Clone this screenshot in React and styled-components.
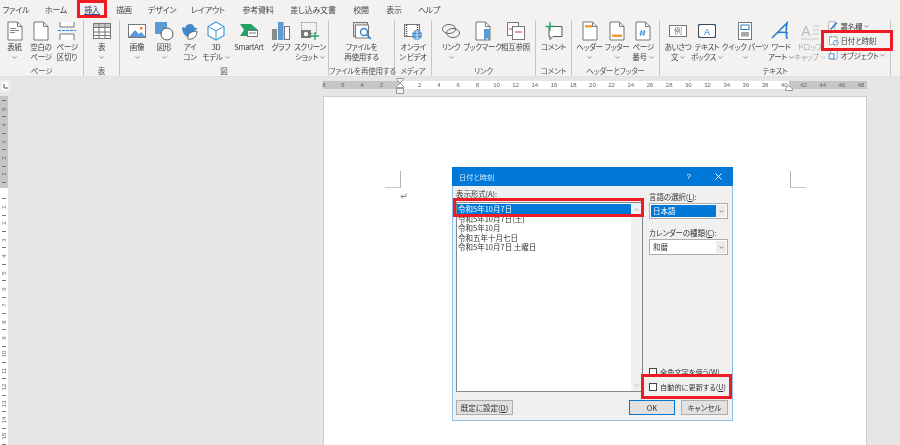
import React from "react";
import styled, { createGlobalStyle } from "styled-components";

const GlobalStyle = createGlobalStyle`
  html, body {
    margin: 0;
    padding: 0;
    background: #e6e6e6;
  }
  * {
    box-sizing: border-box;
  }
`;

const Screen = styled.div`
  position: relative;
  width: 900px;
  height: 445px;
  overflow: hidden;
  display: flex;
  flex-direction: column;
  font-family: "Noto Sans CJK JP", "Noto Sans", sans-serif;
  font-feature-settings: "palt";
  color: #444;
  filter: blur(0.3px);
`;

const Ribbon = styled.div`
  height: 77px;
  flex: none;
  background: #f3f2f1;
  border-bottom: 1px solid #e2e1df;
  display: flex;
  flex-direction: column;
`;

const TabRow = styled.div`
  height: 20px;
  display: flex;
  padding-bottom: 1px;
  align-items: center;
  font-size: 8px;
`;

const Tab = styled.div`
  width: ${(p) => p.$w}px;
  flex: none;
  display: flex;
  justify-content: center;
  letter-spacing: -0.2px;
`;

const TabText = styled.span`
  position: relative;
  line-height: 18px;
  white-space: nowrap;
  color: ${(p) => (p.$active ? "#2b3f6a" : "#444")};

  ${(p) =>
    p.$active &&
    `
    &::after {
      content: "";
      position: absolute;
      left: 0;
      right: 0;
      bottom: 3px;
      height: 1.5px;
      background: #2b579a;
    }
  `}
`;

const GroupRow = styled.div`
  display: flex;
  height: 56px;
`;

const Group = styled.div`
  width: ${(p) => p.$w}px;
  flex: none;
  display: flex;
  flex-direction: column;
  border-right: 1px solid #c8c6c4;
`;

const Buttons = styled.div`
  height: 46px;
  display: flex;
  padding-left: ${(p) => p.$pad || 0}px;
`;

const GroupName = styled.div`
  height: 10px;
  font-size: 7.5px;
  line-height: 10px;
  text-align: center;
  white-space: nowrap;
  letter-spacing: -0.2px;
  color: #555;
`;

const Tool = styled.div`
  width: ${(p) => p.$w}px;
  flex: none;
  display: flex;
  flex-direction: column;
  align-items: center;
  color: ${(p) => (p.$off ? "#a6a6a6" : "#444")};
`;

const ToolIcon = styled.div`
  height: 22px;
  flex: none;
  display: flex;
  align-items: center;
  justify-content: center;
`;

const ToolLine = styled.div`
  height: 10px;
  font-size: 7.5px;
  line-height: 10px;
  letter-spacing: -0.3px;
  white-space: nowrap;
  display: flex;
  align-items: center;
  gap: 2px;
`;

const Stack = styled.div`
  width: 60px;
  display: flex;
  flex-direction: column;
  margin-top: -1px;
  padding-left: 2px;
`;

const StackRow = styled.div`
  height: 14.5px;
  display: flex;
  align-items: center;
  gap: 1.5px;
  font-size: 7.5px;
  letter-spacing: -0.2px;
  white-space: nowrap;
`;

const Workspace = styled.div`
  flex: 1;
  display: flex;
  flex-direction: column;
  padding-top: 3px;
  background: #e6e6e6;
`;

const RulerRow = styled.div`
  height: 13px;
  display: flex;
`;

const Corner = styled.div`
  width: 10px;
  height: 12px;
  background: #fff;
  border: 2px solid #eeeeee;
  display: flex;
  align-items: center;
  justify-content: center;
`;

const HRuler = styled.div`
  position: relative;
  margin: 1px 0 0 313px;
  width: 544px;
  height: 8px;
  display: flex;
  background: linear-gradient(
    to right,
    #c6c6c6 77px,
    #fff 77px,
    #fff 466px,
    #c6c6c6 466px
  );
`;

const RulerNum = styled.span`
  width: 19.2px;
  flex: none;
  text-align: center;
  font-family: "Liberation Sans", sans-serif;
  font-size: 6px;
  line-height: 8px;
  color: #666;

  &:first-child {
    margin-left: -8.8px;
  }
`;

const Marker = styled.svg`
  position: absolute;
  left: ${(p) => p.$x}px;
  top: ${(p) => p.$y}px;
`;

const DocRow = styled.div`
  flex: 1;
  display: flex;
  margin-top: 4px;
`;

const VRuler = styled.div`
  width: 8px;
  flex: none;
  margin-top: -1px;
  padding-top: 0.5px;
  display: flex;
  flex-direction: column;
  align-items: center;
  background: linear-gradient(to bottom, #c6c6c6 92px, #fff 92px);
`;

const VCell = styled.div`
  height: 8.2px;
  flex: none;
  display: flex;
  align-items: center;
  justify-content: center;
  font-family: "Liberation Sans", sans-serif;
  font-size: 6px;
  line-height: 8px;
  color: #666;

  span {
    display: block;
    transform: rotate(-90deg);
  }

  i {
    display: block;
    width: 4px;
    height: 1px;
    background: #777;
  }
`;

const Page = styled.div`
  margin-left: 316px;
  width: 542px;
  background: #fff;
  box-shadow: 0 0 0 1px #cfcfcf;
  padding: 74px 60px 0 61px;
`;

const CropRow = styled.div`
  display: flex;
  justify-content: space-between;
`;

const Crop = styled.div`
  width: 16px;
  height: 17px;
  border-bottom: 1px solid #c8c8c8;
  border-${(p) => (p.$right ? "left" : "right")}: 1px solid #b4b4b4;
`;

const ReturnMark = styled.svg`
  display: block;
  margin: 5px 0 0 15px;
`;

const Dialog = styled.div`
  position: absolute;
  left: 452px;
  top: 167px;
  width: 281px;
  height: 254px;
  display: flex;
  flex-direction: column;
  background: #f0f0f0;
  border: 1px solid #8fc0e8;
  border-top: none;
`;

const TitleBar = styled.div`
  height: 19px;
  margin: 0 -1px;
  flex: none;
  display: flex;
  align-items: center;
  padding: 0 11px 0 7px;
  background: #0078d7;
  color: #d6e9f8;
  font-size: 7.2px;
`;

const TitleText = styled.div`
  flex: 1;
`;

const TitleHelp = styled.div`
  font-family: "Liberation Sans", sans-serif;
  font-size: 8px;
  color: #fff;
  margin-right: 24px;
`;

const DialogBody = styled.div`
  flex: 1;
  display: flex;
  gap: 6px;
  padding: 0 4px 0 3px;
`;

const LeftCol = styled.div`
  width: 187px;
  flex: none;
  display: flex;
  flex-direction: column;
`;

const RightCol = styled.div`
  width: 79px;
  flex: none;
  display: flex;
  flex-direction: column;
`;

const FieldLabel = styled.div`
  font-size: 7.5px;
  line-height: 11px;
  color: #333;
  white-space: nowrap;
  letter-spacing: -0.1px;
  margin-top: ${(p) => p.$top}px;
  margin-bottom: ${(p) => p.$bottom}px;
`;

const ListBox = styled.div`
  height: 190px;
  display: flex;
  background: #fff;
  border: 1px solid #828790;
`;

const ListItems = styled.div`
  flex: 1;
  padding: 1px 0 0 0;
`;

const ListItem = styled.div`
  height: ${(p) => (p.$selected ? "10px" : "9.4px")};
  padding-left: 1px;
  font-size: 7.5px;
  line-height: 9.4px;
  white-space: nowrap;
  color: ${(p) => (p.$selected ? "#fff" : "#333")};
  background: ${(p) => (p.$selected ? "#0078d7" : "transparent")};
`;

const ScrollBar = styled.div`
  width: 11px;
  flex: none;
  display: flex;
  flex-direction: column;
  justify-content: space-between;
  align-items: center;
  padding: 5px 0 4px;
  background: #f0f0f0;
`;

const Select = styled.div`
  height: 16px;
  display: flex;
  padding: 1px;
  background: #fff;
  border: 1px solid #adadad;
`;

const SelectValue = styled.div`
  flex: 1;
  padding-left: 2px;
  font-size: 7.5px;
  line-height: 12px;
  color: ${(p) => (p.$selected ? "#fff" : "#333")};
  background: ${(p) => (p.$selected ? "#0078d7" : "transparent")};
`;

const SelectArrow = styled.div`
  width: 10px;
  flex: none;
  display: flex;
  align-items: center;
  justify-content: center;
  background: #ececec;
`;

const Checks = styled.div`
  margin-top: 112px;
  display: flex;
  flex-direction: column;
  gap: 5px;
`;

const CheckRow = styled.div`
  height: 10px;
  display: flex;
  align-items: center;
  gap: 3px;
  font-size: 7.2px;
  color: #333;
  white-space: nowrap;
`;

const CheckBox = styled.div`
  width: 8px;
  height: 8px;
  flex: none;
  background: #fff;
  border: 1px solid #444;
`;

const DialogFooter = styled.div`
  display: flex;
  padding: 0 4px 0 3px;
  margin: 8px 0 5px;
`;

const Button = styled.div`
  width: ${(p) => p.$w}px;
  height: 15px;
  margin-left: ${(p) => p.$left || 0}px;
  display: flex;
  align-items: center;
  justify-content: center;
  font-size: 7.5px;
  color: #333;
  white-space: nowrap;
  background: #e1e1e1;
  border: ${(p) => (p.$primary ? "1.5px solid #0078d7" : "1px solid #adadad")};
`;

const Highlight = styled.div`
  position: absolute;
  left: ${(p) => p.$x}px;
  top: ${(p) => p.$y}px;
  width: ${(p) => p.$w}px;
  height: ${(p) => p.$h}px;
  border: 3px solid #ed1c24;
`;

const line = "#777";
const blue = "#2b7cd3";

const PageShape = () => (
  <>
    <path d="M3 1h9.500l4.500 4.500V19H3z" fill="#fff" stroke={line} />
    <path d="M12.500 1v4.500H17" fill="none" stroke={line} />
  </>
);

const icons = {
  cover: (
    <>
      <PageShape />
      <path d="M5 7h6v1H5zM5 9h9v1H5zM5 11h5v1H5z" fill="#8a8a8a" />
    </>
  ),
  blank: <PageShape />,
  pageBreak: (
    <>
      <path d="M3 1v5h14V1M3 19v-6h14v6" fill="#fff" stroke={line} />
      <path d="M1 9.500h18" stroke={blue} strokeWidth="1" strokeDasharray="3 1" />
    </>
  ),
  table: (
    <>
      <rect x="1.500" y="2.500" width="17" height="15" fill="#fff" stroke={line} />
      <rect x="1.500" y="2.500" width="17" height="4" fill="#c8c8c8" stroke={line} />
      <path d="M7 3v14M13 3v14M2 11h16M2 14.500h16" stroke={line} />
    </>
  ),
  picture: (
    <>
      <rect x="1.500" y="3.500" width="17" height="13" fill="#fff" stroke={line} />
      <path d="M2 16l6-7 4 4 2-2 4 4v1z" fill="#5b9bd5" />
      <rect x="13" y="6" width="2.500" height="2.500" fill="#ed7d31" />
    </>
  ),
  shapes: (
    <>
      <rect x="1" y="1" width="12" height="12" fill="#5b9bd5" />
      <circle cx="13" cy="13" r="6" fill="#fff" stroke="#555" />
    </>
  ),
  icon: (
    <>
      <path d="M2 6l3 1c1-4 8-6 9-1 1 1 3 1 4 1l-3 2c0 4-3 7-7 7-4-1-6-6-6-10z" fill="#3f87c9" />
      <path d="M8 18c-1-4 2-8 9-8 0 5-3 9-9 8z" fill="#fff" stroke="#666" />
    </>
  ),
  cube: (
    <>
      <path d="M10 1l8 4.500v9L10 19l-8-4.500v-9z" fill="#fff" stroke="#3f9fd8" strokeWidth="1.200" />
      <path d="M2 5.500L10 10l8-4.500M10 10v9" fill="none" stroke="#3f9fd8" />
    </>
  ),
  smartArt: (
    <>
      <path d="M1 3h11l7 6-7 6H1l4-6z" fill="#21a366" />
      <rect x="8.500" y="9.500" width="10" height="6" fill="#fff" stroke={line} />
      <path d="M10 12h7" stroke={line} />
    </>
  ),
  chart: (
    <>
      <rect x="1" y="8" width="5" height="11" fill="#8a8a8a" />
      <rect x="7" y="1" width="5.500" height="18" fill="#5b9bd5" />
      <rect x="13.500" y="5.500" width="5" height="13" fill="#fff" stroke={line} />
    </>
  ),
  screenshot: (
    <>
      <rect x="1.500" y="1.500" width="15" height="11" fill="none" stroke="#999" strokeDasharray="2 1" />
      <rect x="1" y="9" width="10" height="8" fill="#777" />
      <circle cx="6" cy="13" r="2.200" fill="#fff" />
      <path d="M15 11v8M11 15h8" stroke="#21a366" strokeWidth="1.300" />
    </>
  ),
  reuse: (
    <>
      <rect x="1.500" y="1.500" width="14" height="14" fill="#ddd" stroke={line} />
      <rect x="3.500" y="4" width="13" height="13" fill="#fff" stroke={line} />
      <circle cx="12" cy="11" r="3.500" fill="#fff" stroke={blue} strokeWidth="1.300" />
      <path d="M14.500 13.500L19 18" stroke={blue} strokeWidth="1.500" />
    </>
  ),
  video: (
    <>
      <rect x="1.500" y="3.500" width="15" height="12" fill="#fff" stroke={line} />
      <path d="M3.500 4v11M14.500 4v6" stroke="#444" strokeWidth="1.500" strokeDasharray="1 1" />
      <circle cx="14" cy="14" r="5" fill="#3f87c9" />
      <path d="M9 14h10M14 9v10M10.500 11h7M10.500 17h7" stroke="#fff" strokeWidth="0.700" />
    </>
  ),
  link: (
    <>
      <ellipse cx="8" cy="8" rx="6.500" ry="4.500" fill="none" stroke="#666" />
      <ellipse cx="12" cy="12" rx="6.500" ry="4.500" fill="none" stroke="#666" />
    </>
  ),
  bookmark: (
    <>
      <PageShape />
      <path d="M11 8h6v12l-3-3-3 3z" fill="#5b9bd5" />
    </>
  ),
  crossRef: (
    <>
      <rect x="1.500" y="1.500" width="11" height="13" fill="#fff" stroke={line} />
      <rect x="6.500" y="5.500" width="12" height="13" fill="#fff" stroke={line} />
      <path d="M3 8h3M9 11h7" stroke="#d13438" strokeWidth="1.200" />
    </>
  ),
  comment: (
    <>
      <path d="M5 5.500h13v10H9l-3 3v-3H5z" fill="#fff" stroke="#555" />
      <path d="M6 1v9M1.500 5.500h9" stroke="#21a366" strokeWidth="1.300" />
    </>
  ),
  header: (
    <>
      <PageShape />
      <rect x="5" y="4" width="7" height="2.500" fill="#f0a030" />
    </>
  ),
  footer: (
    <>
      <PageShape />
      <rect x="5" y="13.500" width="10" height="2.500" fill="#f0a030" />
    </>
  ),
  pageNumber: (
    <>
      <PageShape />
      <path d="M8.500 9l-1 6M11.500 9l-1 6M7 11h5.500M6.500 13h5.500" stroke={blue} strokeWidth="0.800" />
    </>
  ),
  greeting: (
    <>
      <rect x="1.500" y="4.500" width="17" height="11" fill="#fff" stroke={line} />
      <text x="10" y="13" fontSize="8" textAnchor="middle" fill="#777">例</text>
    </>
  ),
  textBox: (
    <>
      <rect x="1.500" y="3.500" width="17" height="13" fill="#fff" stroke="#444" />
      <path d="M1 3h2v2H1zM17 3h2v2h-2zM1 15h2v2H1zM17 15h2v2h-2z" fill={blue} />
      <text x="10" y="14" fontSize="9" fontFamily="Liberation Sans" textAnchor="middle" fill={blue}>A</text>
    </>
  ),
  quickParts: (
    <>
      <rect x="3.500" y="1.500" width="13" height="17" fill="#fff" stroke={line} />
      <rect x="6" y="4" width="8" height="4.500" fill="#fff" stroke={blue} />
      <rect x="6" y="11" width="8" height="4.500" fill="#a8a8a8" />
    </>
  ),
  wordArt: (
    <path d="M1 17C6 12 12 6 16 2c-1 5-1 10 0 16M5 12c4-1 8-1 12 0" fill="none" stroke={blue} strokeWidth="1.600" />
  ),
  dropCap: (
    <>
      <text x="6" y="15" fontSize="14" fontFamily="Liberation Sans" textAnchor="middle" fill="#bcbcbc">A</text>
      <path d="M13 5h6M13 9h6M13 13h6M1 18h18" stroke="#c8c8c8" />
    </>
  ),
  signature: (
    <>
      <rect x="1.500" y="1.500" width="11" height="16" fill="#fff" stroke={line} />
      <path d="M5 15L16 3" stroke={blue} strokeWidth="3" />
    </>
  ),
  date: (
    <>
      <rect x="2.500" y="3.500" width="14" height="14" fill="#fff" stroke={line} />
      <path d="M6 1v4M13 1v4" stroke={line} />
      <circle cx="14" cy="14" r="4.500" fill="#fff" stroke={blue} strokeWidth="1.300" />
      <path d="M14 11.500V14h2" fill="none" stroke={blue} />
    </>
  ),
  object: (
    <>
      <rect x="4.500" y="1.500" width="12" height="15" fill="#fff" stroke={line} />
      <rect x="2" y="7" width="9" height="9" fill="#fff" stroke={blue} strokeWidth="1.500" />
    </>
  ),
};

const Icon = ({ name, size = 20 }) => (
  <svg width={size} height={size} viewBox="0 0 20 20">
    {icons[name]}
  </svg>
);

const Chevron = ({ up, color = "#666" }) => (
  <svg width="5" height="3" viewBox="0 0 6 4">
    <path d={up ? "M0.500 3.500L3 1l2.500 2.500" : "M0.500 0.500L3 3l2.500-2.500"} fill="none" stroke={color} />
  </svg>
);

// lines: label lines, a trailing "v" on a line adds the drop-down arrow
const ribbonGroups = [
  {
    name: "ページ",
    w: 84,
    pad: 1,
    tools: [
      { icon: "cover", w: 27, lines: ["表紙", "v"] },
      { icon: "blank", w: 26, lines: ["空白の", "ページ"] },
      { icon: "pageBreak", w: 26, lines: ["ページ", "区切り"] },
    ],
  },
  { name: "表", w: 36, tools: [{ icon: "table", w: 35, lines: ["表", "v"] }] },
  {
    name: "図",
    w: 209,
    pad: 3,
    tools: [
      { icon: "picture", w: 28, lines: ["画像", "v"] },
      { icon: "shapes", w: 26, lines: ["図形", "v"] },
      { icon: "icon", w: 26, lines: ["アイ", "コン"] },
      { icon: "cube", w: 26, lines: ["3D", "モデル v"] },
      { icon: "smartArt", w: 40, lines: ["SmartArt"] },
      { icon: "chart", w: 24, lines: ["グラフ"] },
      { icon: "screenshot", w: 34, lines: ["スクリーン", "ショット v"] },
    ],
  },
  {
    name: "ファイルを再使用する",
    w: 66,
    tools: [{ icon: "reuse", w: 65, lines: ["ファイルを", "再使用する"] }],
  },
  {
    name: "メディア",
    w: 37,
    tools: [{ icon: "video", w: 36, lines: ["オンライ", "ン ビデオ"] }],
  },
  {
    name: "リンク",
    w: 104,
    pad: 3,
    tools: [
      { icon: "link", w: 32, lines: ["リンク", "v"] },
      { icon: "bookmark", w: 31, lines: ["ブックマーク"] },
      { icon: "crossRef", w: 35, lines: ["相互参照"] },
    ],
  },
  {
    name: "コメント",
    w: 36,
    tools: [{ icon: "comment", w: 35, lines: ["コメント"] }],
  },
  {
    name: "ヘッダーとフッター",
    w: 88,
    pad: 3,
    tools: [
      { icon: "header", w: 29, lines: ["ヘッダー", "v"] },
      { icon: "footer", w: 26, lines: ["フッター", "v"] },
      { icon: "pageNumber", w: 26, lines: ["ページ", "番号 v"] },
    ],
  },
];

const textTools = [
  { icon: "greeting", w: 28, lines: ["あいさつ", "文 v"] },
  { icon: "textBox", w: 30, lines: ["テキスト", "ボックス v"] },
  { icon: "quickParts", w: 46, lines: ["クイック パーツ", "v"] },
  { icon: "wordArt", w: 26, lines: ["ワード", "アート v"] },
  { icon: "dropCap", w: 32, lines: ["ドロップ", "キャップ v"], off: true },
];

const tabs = [
  { label: "ファイル", w: 32 },
  { label: "ホーム", w: 48 },
  { label: "挿入", w: 24 },
  { label: "描画", w: 40 },
  { label: "デザイン", w: 36 },
  { label: "レイアウト", w: 56 },
  { label: "参考資料", w: 44 },
  { label: "差し込み文書", w: 66 },
  { label: "校閲", w: 30 },
  { label: "表示", w: 36 },
  { label: "ヘルプ", w: 34 },
];

const ToolLabel = ({ text, off }) => {
  const color = off ? "#bdbdbd" : "#666";
  if (text === "v") {
    return (
      <ToolLine>
        <Chevron color={color} />
      </ToolLine>
    );
  }
  if (text.endsWith(" v")) {
    return (
      <ToolLine>
        {text.slice(0, -2)}
        <Chevron color={color} />
      </ToolLine>
    );
  }
  return <ToolLine>{text}</ToolLine>;
};

const ToolButton = ({ tool }) => (
  <Tool $w={tool.w} $off={tool.off}>
    <ToolIcon>
      <Icon name={tool.icon} />
    </ToolIcon>
    {tool.lines.map((text) => (
      <ToolLabel key={text} text={text} off={tool.off} />
    ))}
  </Tool>
);

const hNumbers = [8, 6, 4, 2, "", 2, 4, 6, 8, 10, 12, 14, 16, 18, 20, 22, 24, 26, 28, 30, 32, 34, 36, 38, 40, 42, 44, 46, 48];

const vCells = [];
[5, 4, 3, 2, 1, 0, 1, 2, 3, 4, 5, 6, 7, 8, 9, 10, 11, 12, 13, 14, 15].forEach((n) => {
  vCells.push(null);
  vCells.push(n);
});
vCells.push(null);

const listItems = ["令和5年10月7日(土)", "令和5年10月", "令和五年十月七日", "令和5年10月7日 土曜日"];

const App = () => (
  <Screen>
    <GlobalStyle />
    <Ribbon>
      <TabRow>
        {tabs.map((t) => (
          <Tab key={t.label} $w={t.w}>
            <TabText $active={t.label === "挿入"}>{t.label}</TabText>
          </Tab>
        ))}
      </TabRow>
      <GroupRow>
        {ribbonGroups.map((g) => (
          <Group key={g.name} $w={g.w}>
            <Buttons $pad={g.pad}>
              {g.tools.map((tool) => (
                <ToolButton key={tool.icon} tool={tool} />
              ))}
            </Buttons>
            <GroupName>{g.name}</GroupName>
          </Group>
        ))}
        <Group $w={231}>
          <Buttons $pad={4}>
            {textTools.map((tool) => (
              <ToolButton key={tool.icon} tool={tool} />
            ))}
            <Stack>
              <StackRow>
                <Icon name="signature" size={11} />
                署名欄 <Chevron />
              </StackRow>
              <StackRow>
                <Icon name="date" size={11} />
                日付と時刻
              </StackRow>
              <StackRow>
                <Icon name="object" size={11} />
                オブジェクト <Chevron />
              </StackRow>
            </Stack>
          </Buttons>
          <GroupName>テキスト</GroupName>
        </Group>
      </GroupRow>
    </Ribbon>

    <Workspace>
      <RulerRow>
        <Corner>
          <svg width="5" height="5" viewBox="0 0 5 5">
            <path d="M1 0v4h4" fill="none" stroke="#555" />
          </svg>
        </Corner>
        <HRuler>
          {hNumbers.map((n, i) => (
            <RulerNum key={i}>{n}</RulerNum>
          ))}
          <Marker $x={73} $y={-3} width="8" height="17" viewBox="0 0 8 17">
            <path d="M0.500 0.500h7v1L4 5 0.500 1.500z" fill="#f3f3f3" stroke="#999" />
            <path d="M4 5l3.500 3.500v1h-7v-1z" fill="#fff" stroke="#999" />
            <rect x="0.500" y="10.500" width="7" height="5" fill="#f3f3f3" stroke="#999" />
          </Marker>
          <Marker $x={462} $y={4} width="8" height="6" viewBox="0 0 8 6">
            <path d="M4 0.500l3.500 3.500v1.500h-7V4z" fill="#fff" stroke="#999" />
          </Marker>
        </HRuler>
      </RulerRow>
      <DocRow>
        <VRuler>
          {vCells.map((n, i) => (
            <VCell key={i}>{n === null ? <i /> : n === 0 ? null : <span>{n}</span>}</VCell>
          ))}
        </VRuler>
        <Page>
          <CropRow>
            <Crop />
            <Crop $right />
          </CropRow>
          <ReturnMark width="7" height="6" viewBox="0 0 7 6">
            <path d="M6 0.500v3H1M3 1.500L1 3.500l2 2" fill="none" stroke="#888" />
          </ReturnMark>
        </Page>
      </DocRow>
    </Workspace>

    <Dialog>
      <TitleBar>
        <TitleText>日付と時刻</TitleText>
        <TitleHelp>?</TitleHelp>
        <svg width="7" height="7" viewBox="0 0 7 7">
          <path d="M0.500 0.500l6 6M6.500 0.500l-6 6" stroke="#fff" />
        </svg>
      </TitleBar>
      <DialogBody>
        <LeftCol>
          <FieldLabel $top={2} $bottom={3}>
            表示形式(<u>A</u>):
          </FieldLabel>
          <ListBox>
            <ListItems>
              <ListItem $selected>令和5年10月7日</ListItem>
              {listItems.map((t) => (
                <ListItem key={t}>{t}</ListItem>
              ))}
            </ListItems>
            <ScrollBar>
              <Chevron up color="#a0a0a0" />
              <Chevron color="#a0a0a0" />
            </ScrollBar>
          </ListBox>
        </LeftCol>
        <RightCol>
          <FieldLabel $top={5} $bottom={1}>
            言語の選択(<u>L</u>):
          </FieldLabel>
          <Select>
            <SelectValue $selected>日本語</SelectValue>
            <SelectArrow>
              <Chevron />
            </SelectArrow>
          </Select>
          <FieldLabel $top={8} $bottom={1}>
            カレンダーの種類(<u>C</u>):
          </FieldLabel>
          <Select>
            <SelectValue>和暦</SelectValue>
            <SelectArrow>
              <Chevron />
            </SelectArrow>
          </Select>
          <Checks>
            <CheckRow>
              <CheckBox />
              <span>
                全角文字を使う(<u>W</u>)
              </span>
            </CheckRow>
            <CheckRow>
              <CheckBox />
              <span>
                自動的に更新する(<u>U</u>)
              </span>
            </CheckRow>
          </Checks>
        </RightCol>
      </DialogBody>
      <DialogFooter>
        <Button $w={57}>
          <span>
            既定に設定(<u>D</u>)
          </span>
        </Button>
        <Button $w={46} $left={116} $primary>
          OK
        </Button>
        <Button $w={47} $left={6}>
          キャンセル
        </Button>
      </DialogFooter>
    </Dialog>

    <Highlight $x={77} $y={0} $w={30} $h={18} />
    <Highlight $x={821} $y={30} $w={72} $h={21} />
    <Highlight $x={453} $y={198} $w={191} $h={19} />
    <Highlight $x={641} $y={374} $w={91} $h={25} />
  </Screen>
);

export default App;
